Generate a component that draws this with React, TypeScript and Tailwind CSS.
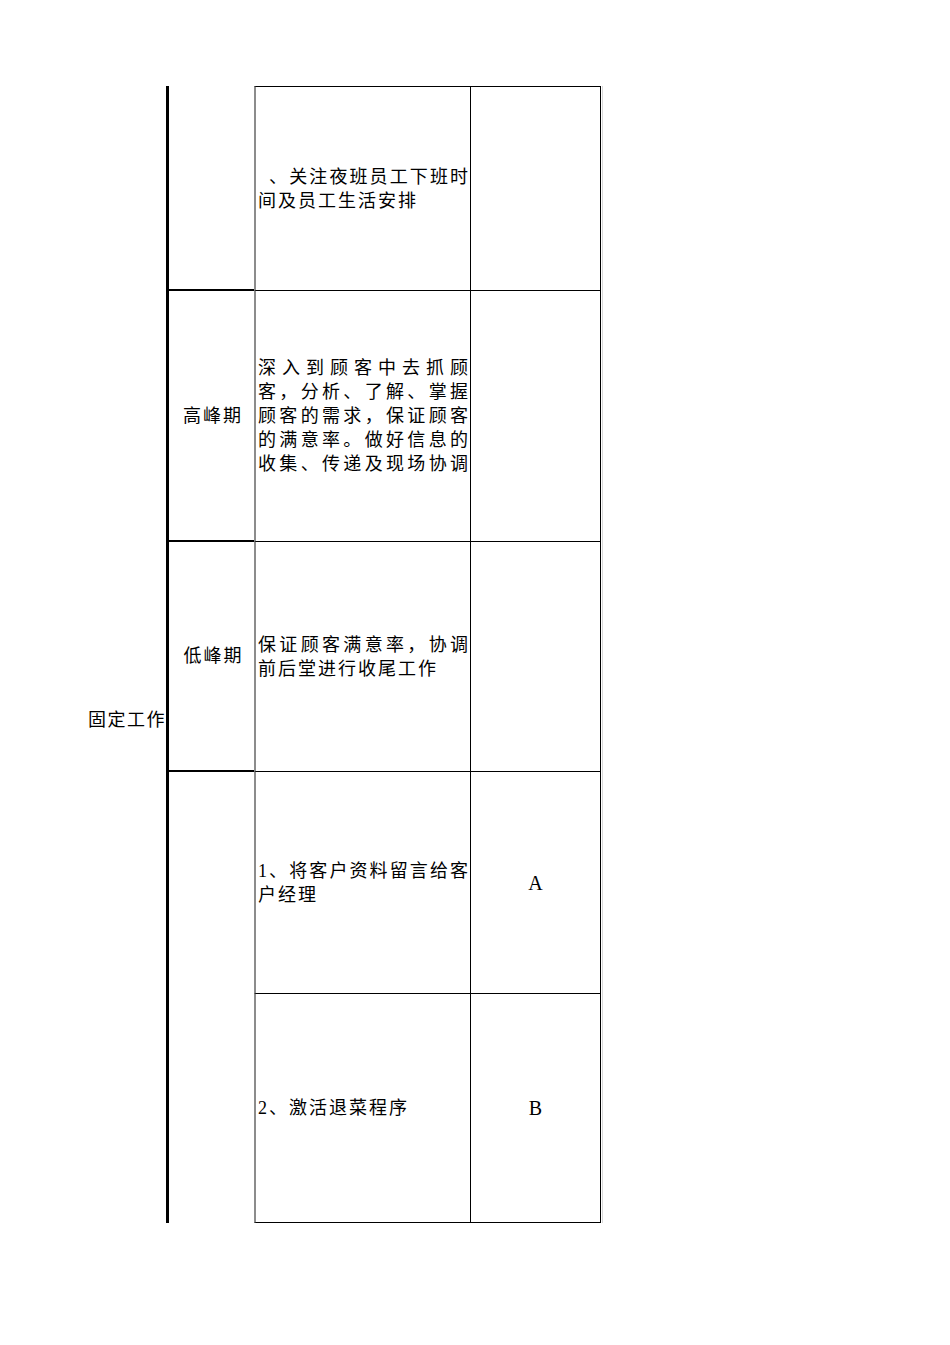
const rows = [
  { period: null, text: "\u2002、关注夜班员工下班时间及员工生活安排", grade: "", h: "r1" },
  { period: "高峰期", text: "深入到顾客中去抓顾客，分析、了解、掌握顾客的需求，保证顾客的满意率。做好信息的收集、传递及现场协调", grade: "", h: "r2", spread: true },
  { period: "低峰期", text: "保证顾客满意率，协调前后堂进行收尾工作", grade: "", h: "r3" },
  { period: null, text: "1、将客户资料留言给客户经理", grade: "A", h: "r4" },
  { period: null, text: "2、激活退菜程序", grade: "B", h: "r5" },
];

const cjk = "[text-autospace:no-autospace] [text-spacing-trim:space-all] [line-break:strict]";

export default function App() {
  return (
    <div className="min-h-[1345px] bg-white pt-[86px] text-black font-['Liberation_Serif','Noto_Sans_CJK_SC',serif]">
      <div className="w-[603px] border-r border-[#d9d9d9]">
        <div className="grid grid-cols-[166px_88px_217px_130px] grid-rows-[205px_251px_230px_222px_229px]">
          {/* merged category cell */}
          <div className={`col-start-1 row-span-5 row-start-1 pt-[622px] text-right text-[18px] leading-[24px] tracking-[1.5px] ${cjk}`}>
            固定工作
          </div>

          {/* period column */}
          <div className="col-start-2 row-start-1 border-b-2 border-l-[3px] border-black" />
          <div className={`col-start-2 row-start-2 flex items-center justify-center border-b-2 border-l-[3px] border-black pl-[3px] text-[18px] leading-[24px] tracking-[2px] ${cjk}`}>
            高峰期
          </div>
          <div className={`col-start-2 row-start-3 flex items-center justify-center border-b-2 border-l-[3px] border-black pl-[4px] text-[18px] leading-[24px] tracking-[2px] ${cjk}`}>
            低峰期
          </div>
          <div className="col-start-2 row-span-2 row-start-4 border-l-[3px] border-black" />

          {/* task + grade columns */}
          {rows.map((r, i) => (
            <div key={r.h} className="contents">
              <div
                className={`col-start-3 flex items-center border-b border-l-2 border-r border-b-black border-l-[#8c8c8c] border-r-black pl-[2px] ${
                  i === 0 ? "border-t border-t-black" : ""
                } ${["row-start-1", "row-start-2", "row-start-3", "row-start-4", "row-start-5"][i]}`}
              >
                <p
                  className={`w-full text-justify text-[18px] leading-[24px] tracking-[2px] ${cjk} ${
                    r.spread ? "[text-align-last:justify]" : ""
                  }`}
                >
                  {r.text}
                </p>
              </div>
              <div
                className={`col-start-4 flex items-center justify-center border-b border-r border-black text-[20px] leading-[24px] ${
                  i === 0 ? "border-t" : ""
                } ${["row-start-1", "row-start-2", "row-start-3", "row-start-4", "row-start-5"][i]}`}
              >
                {r.grade}
              </div>
            </div>
          ))}
        </div>
      </div>
    </div>
  );
}
